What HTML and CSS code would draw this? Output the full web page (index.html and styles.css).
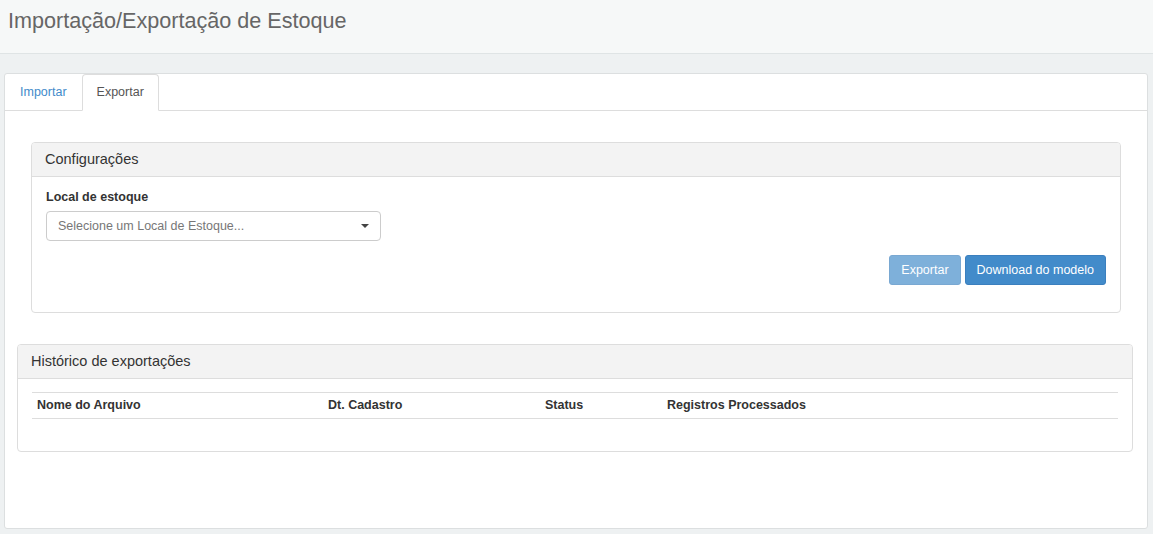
FILE: index.html
```html
<!DOCTYPE html>
<html lang="pt-BR">
<head>
    <meta charset="UTF-8">
    <meta name="viewport" content="width=device-width, initial-scale=1.0">
    <title>Importação/Exportação de Estoque</title>
    <link rel="stylesheet" href="styles.css">
</head>
<body>
    <div class="page-header">
        <h1>Importação/Exportação de Estoque</h1>
    </div>

    <div class="main">
        <div class="card">
            <ul class="tabs">
                <li class="tab">Importar</li>
                <li class="tab active">Exportar</li>
            </ul>

            <div class="tab-content">
                <div class="inner">
                    <div class="panel">
                        <div class="panel-heading">Configurações</div>
                        <div class="panel-body">
                            <label class="label">Local de estoque</label>
                            <div class="select">
                                <span>Selecione um Local de Estoque...</span>
                                <b class="caret"></b>
                            </div>
                            <div class="actions">
                                <button class="btn disabled">Exportar</button>
                                <button class="btn">Download do modelo</button>
                            </div>
                        </div>
                    </div>
                </div>

                <div class="panel">
                    <div class="panel-heading">Histórico de exportações</div>
                    <div class="panel-body">
                        <table class="table">
                            <thead>
                                <tr>
                                    <th class="col-name">Nome do Arquivo</th>
                                    <th class="col-date">Dt. Cadastro</th>
                                    <th class="col-status">Status</th>
                                    <th>Registros Processados</th>
                                </tr>
                            </thead>
                            <tbody></tbody>
                        </table>
                    </div>
                </div>
            </div>
        </div>
    </div>
</body>
</html>
```

FILE: styles.css
```css
body {
    margin: 0;
    font-family: "Liberation Sans", Arial, sans-serif;
    font-size: 12.5px;
    color: #333;
    background-color: #eef1f2;
}
.page-header {
    height: 54px;
    background-color: #f6f8f8;
    border-bottom: 1px solid #dfe4e5;
    box-sizing: border-box;
}
.page-header h1 {
    margin: 0;
    padding: 8px 8px 0;
    font-size: 21.6px;
    font-weight: normal;
    line-height: 26px;
    color: #666;
}
.main {
    padding: 19px 5px 6px 4px;
}
.card {
    background-color: #fff;
    border: 1px solid #dcdfe0;
    border-radius: 3px;
    height: 456px;
    box-sizing: border-box;
}
.tabs {
    list-style: none;
    margin: 0;
    padding: 0;
    display: flex;
    border-bottom: 1px solid #ddd;
}
.tab {
    padding: 9px 14px;
    line-height: 17px;
    color: #428bca;
    border: 1px solid transparent;
    border-radius: 4px 4px 0 0;
    margin-bottom: -1px;
}
.tab.active {
    color: #555;
    border-color: #ddd #ddd transparent;
    background-color: #fff;
}
.tab-content {
    padding: 31px 14px 0 12px;
}
.inner {
    padding: 0 12px 0 14px;
}
.panel {
    border: 1px solid #ddd;
    border-radius: 4px;
    margin-bottom: 31px;
    background-color: #fff;
}
.panel-heading {
    background-color: #f3f3f3;
    border-bottom: 1px solid #ddd;
    border-radius: 3px 3px 0 0;
    padding: 0 13px;
    height: 33px;
    line-height: 33px;
    font-size: 14.5px;
    color: #333;
}
.panel-body {
    padding: 13px 14px;
}
.label {
    display: block;
    font-weight: bold;
    margin-bottom: 7px;
}
.select {
    width: 335px;
    height: 30px;
    box-sizing: border-box;
    border: 1px solid #ccc;
    border-radius: 4px;
    padding: 0 11px;
    display: flex;
    align-items: center;
    justify-content: space-between;
    color: #777;
}
.caret {
    width: 0;
    height: 0;
    border-left: 4px solid transparent;
    border-right: 4px solid transparent;
    border-top: 4px solid #444;
}
.actions {
    display: flex;
    justify-content: flex-end;
    gap: 4px;
    margin-top: 14px;
    margin-bottom: 14px;
}
.btn {
    font-family: inherit;
    font-size: 12.5px;
    color: #fff;
    background-color: #428bca;
    border: 1px solid #3b7fbe;
    border-radius: 3px;
    height: 30px;
    padding: 0 11px;
}
.btn.disabled {
    opacity: 0.68;
}
.table {
    width: 100%;
    border-collapse: collapse;
    margin-bottom: 19px;
}
.table th {
    text-align: left;
    font-weight: bold;
    padding: 5px 5px;
    line-height: 15px;
    border-top: 1px solid #ddd;
    border-bottom: 1px solid #ddd;
}
.col-name {
    width: 281px;
}
.col-date {
    width: 207px;
}
.col-status {
    width: 112px;
}
```
